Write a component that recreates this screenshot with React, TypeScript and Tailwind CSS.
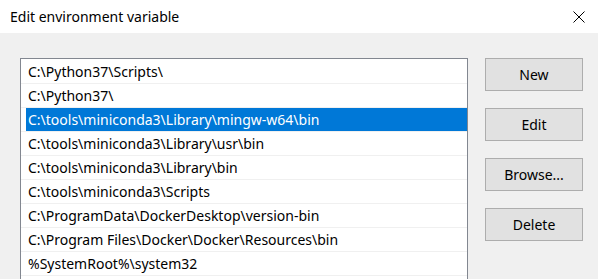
const paths = [
  "C:\\Python37\\Scripts\\",
  "C:\\Python37\\",
  "C:\\tools\\miniconda3\\Library\\mingw-w64\\bin",
  "C:\\tools\\miniconda3\\Library\\usr\\bin",
  "C:\\tools\\miniconda3\\Library\\bin",
  "C:\\tools\\miniconda3\\Scripts",
  "C:\\ProgramData\\DockerDesktop\\version-bin",
  "C:\\Program Files\\Docker\\Docker\\Resources\\bin",
  "%SystemRoot%\\system32",
];

const SELECTED = 2;

export default function App() {
  return (
    <div
      className="w-[598px] h-[279px] overflow-hidden bg-[#f0f0f0] text-black"
      style={{ fontFamily: '"Noto Sans", "Open Sans", sans-serif' }}
    >
      {/* Title bar */}
      <div className="h-[33px] bg-white flex items-center justify-between pl-[10px] pr-[13px]">
        <span className="text-[14px]">Edit environment variable</span>
        <svg width="12" height="12" viewBox="0 0 12 12" className="mt-[1px]">
          <path d="M0.5 0.5 L11.5 11.5 M11.5 0.5 L0.5 11.5" stroke="#000" strokeWidth="1" />
        </svg>
      </div>

      {/* Body */}
      <div className="flex pl-[20px] pt-[25px]">
        <div className="w-[448px] h-[240px] border border-[#828790] bg-white pt-[1px]">
          {paths.map((p, i) => (
            <div key={i} className="h-[24px] border-b border-[#f0f0f0] pl-[5px]">
              <div
                className={
                  "h-[23px] flex items-center pl-[2px] text-[14px] " +
                  (i === SELECTED ? "bg-[#0078d7] text-white" : "")
                }
              >
                {p}
              </div>
            </div>
          ))}
        </div>

        <div className="flex flex-col gap-[17px] ml-[17px]">
          {["New", "Edit", "Browse...", "Delete"].map((b) => (
            <button
              key={b}
              className="w-[98px] h-[33px] bg-[#e1e1e1] border border-[#adadad] text-[14px] flex items-center justify-center"
            >
              {b}
            </button>
          ))}
        </div>
      </div>
    </div>
  );
}
